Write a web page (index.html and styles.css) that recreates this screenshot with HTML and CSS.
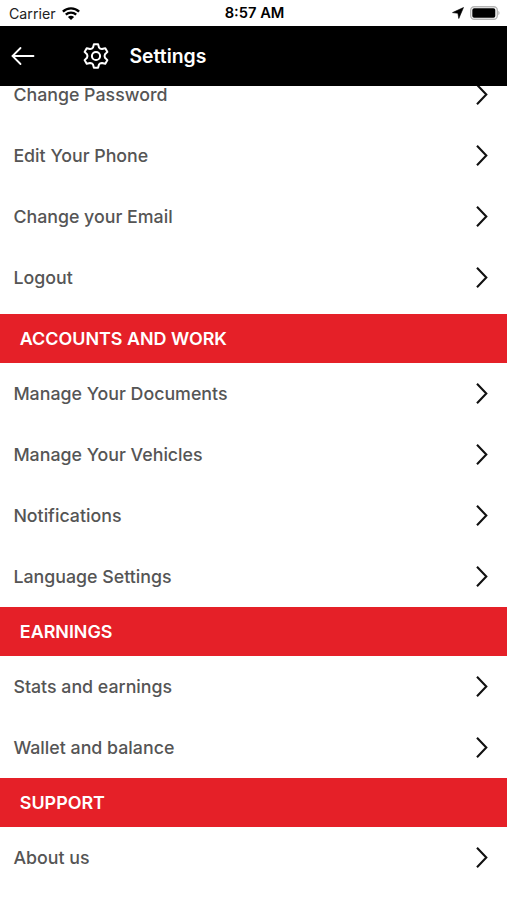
FILE: index.html
```html
<!DOCTYPE html>
<html lang="en">
<head>
  <meta charset="UTF-8">
  <meta name="viewport" content="width=device-width, initial-scale=1.0">
  <title>Settings</title>
  <link rel="stylesheet" href="styles.css">
</head>
<body>
  <svg class="sprite">
    <symbol id="chevron" viewBox="0 0 14 24">
      <path d="M2 1.8L11.3 11.5L2 21.2" fill="none" stroke="#111" stroke-width="2.1"/>
    </symbol>
  </svg>
  <div class="page">
    <div class="status">
      <div class="carrier">
        <span>Carrier</span>
        <svg class="wifi" viewBox="0 0 18 13">
          <path d="M.9 4.6C5.3.2 12.7.2 17.1 4.6M3.8 7.7C6.8 4.9 11.2 4.9 14.2 7.7" fill="none" stroke="#000" stroke-width="2.3"/>
          <path d="M9 13L5.9 9.9C7.6 8.3 10.4 8.3 12.1 9.9Z"/>
        </svg>
      </div>
      <span class="time">8:57 AM</span>
      <div class="power">
        <svg class="location" viewBox="0 0 12 12"><path d="M11.5.5L6.8 11.5L5.9 6.3L.5 5.6Z" stroke="#000" stroke-width=".6"/></svg>
        <svg class="battery" viewBox="0 0 30 14">
          <rect x=".7" y=".7" width="26.6" height="12.6" rx="3.5" fill="none" stroke="#b5b5b5" stroke-width="1.4"/>
          <rect x="2.3" y="2.2" width="23" height="9.6" rx="1.8"/>
          <path d="M28.3 4.8C30 5.5 30 8.5 28.3 9.2Z" fill="#b5b5b5"/>
        </svg>
      </div>
    </div>
    <div class="header">
      <svg class="back" viewBox="0 0 24 20"><path d="M9.5 2L1.5 10L9.5 18M1.5 10H22.5" fill="none" stroke="#fff" stroke-width="1.8" stroke-linecap="round"/></svg>
      <svg class="gear" viewBox="0 0 26 26" fill="none" stroke="#fff" stroke-width="2" stroke-linejoin="round">
        <path d="M10.9 1.2H15.1L16 4.4Q17 6.1 19 6L22.3 5.2L24.4 8.9L22 11.2Q21.1 13 22 14.8L24.4 17.1L22.3 20.8L19 20Q17 19.9 16 21.6L15.1 24.8H10.9L10 21.6Q9 19.9 7 20L3.7 20.8L1.6 17.1L4 14.8Q4.9 13 4 11.2L1.6 8.9L3.7 5.2L7 6Q9 6.1 10 4.4Z"/>
        <circle cx="13" cy="13" r="4.1"/>
      </svg>
      <span class="title">Settings</span>
    </div>
    <div class="list">
      <div class="group">
        <div class="item"><span>Change Password</span><svg class="arrow"><use href="#chevron"/></svg></div>
        <div class="item"><span>Edit Your Phone</span><svg class="arrow"><use href="#chevron"/></svg></div>
        <div class="item"><span>Change your Email</span><svg class="arrow"><use href="#chevron"/></svg></div>
        <div class="item"><span>Logout</span><svg class="arrow"><use href="#chevron"/></svg></div>
      </div>
      <div class="section">ACCOUNTS AND WORK</div>
      <div class="item"><span>Manage Your Documents</span><svg class="arrow"><use href="#chevron"/></svg></div>
      <div class="item"><span>Manage Your Vehicles</span><svg class="arrow"><use href="#chevron"/></svg></div>
      <div class="item"><span>Notifications</span><svg class="arrow"><use href="#chevron"/></svg></div>
      <div class="item"><span>Language Settings</span><svg class="arrow"><use href="#chevron"/></svg></div>
      <div class="section">EARNINGS</div>
      <div class="item"><span>Stats and earnings</span><svg class="arrow"><use href="#chevron"/></svg></div>
      <div class="item"><span>Wallet and balance</span><svg class="arrow"><use href="#chevron"/></svg></div>
      <div class="section">SUPPORT</div>
      <div class="item"><span>About us</span><svg class="arrow"><use href="#chevron"/></svg></div>
    </div>
  </div>
</body>
</html>
```
FILE: styles.css
```css
body{
  margin: 0;
  font-family: Inter, "Liberation Sans", sans-serif;
  background-color: #fff;
}
.sprite{
  display: none;
}
.page{
  height: 900px;
  display: flex;
  flex-direction: column;
  overflow: hidden;
}
.status{
  height: 26px;
  flex-shrink: 0;
  display: grid;
  grid-template-columns: 1fr auto 1fr;
  align-items: center;
  padding: 0 7px 0 9px;
  box-sizing: border-box;
  font-size: 14px;
  color: #000;
}
.carrier,
.power{
  display: flex;
  align-items: center;
}
.carrier{
  gap: 6px;
  font-size: 14.2px;
  color: #222;
}
.power{
  justify-content: flex-end;
  gap: 6px;
}
.wifi{
  width: 18px;
  height: 13px;
}
.time{
  font-size: 14.7px;
  font-weight: 600;
}
.location{
  width: 12px;
  height: 12px;
}
.battery{
  width: 30px;
  height: 14px;
}
.header{
  height: 60px;
  flex-shrink: 0;
  display: flex;
  align-items: center;
  padding-left: 11px;
  background-color: #000;
}
.back{
  width: 24px;
  height: 20px;
}
.gear{
  width: 26px;
  height: 26px;
  margin-left: 48px;
}
.title{
  margin-left: 20.5px;
  font-size: 19.4px;
  font-weight: 600;
  color: #fff;
}
.list{
  flex: 1;
  overflow: hidden;
}
/* the list is scrolled a little under the header */
.group{
  margin-top: -22px;
  padding-bottom: 6px;
}
.item{
  height: 61px;
  display: flex;
  align-items: center;
  justify-content: space-between;
  padding: 0 18px 0 13.4px;
  font-size: 17.8px;
  font-weight: 500;
  color: #555;
}
.arrow{
  width: 14px;
  height: 24px;
}
.section{
  height: 49px;
  display: flex;
  align-items: center;
  padding-left: 19.8px;
  font-size: 17.9px;
  font-weight: 600;
  color: #fff;
  background-color: #e52028;
}
```
